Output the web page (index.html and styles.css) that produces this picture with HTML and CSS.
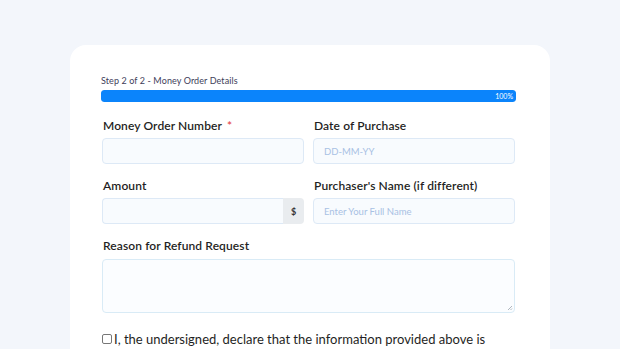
FILE: index.html
```html
<!DOCTYPE html>
<html>
<head>
<meta charset="utf-8">
<link rel="stylesheet" href="styles.css">
</head>
<body>
<div class="card">
  <div class="step">Step 2 of 2 - Money Order Details</div>
  <div class="progress"><div class="bar" style="width:100%">100%</div></div>
  <div class="grid">
    <div class="field">
      <label class="label">Money Order Number <span class="req">*</span></label>
      <div class="input"></div>
    </div>
    <div class="field">
      <label class="label">Date of Purchase</label>
      <div class="input"><span class="ph">DD-MM-YY</span></div>
    </div>
    <div class="field">
      <label class="label">Amount</label>
      <div class="group"><div class="input grow"></div><div class="addon">$</div></div>
    </div>
    <div class="field">
      <label class="label">Purchaser's Name (if different)</label>
      <div class="input"><span class="ph">Enter Your Full Name</span></div>
    </div>
    <div class="field full">
      <label class="label">Reason for Refund Request</label>
      <div class="textarea"><svg class="grip" width="6" height="6" viewBox="0 0 6 6"><path d="M5 1L1 5M5 3.5L3.5 5" stroke="#9aa3ad" stroke-width="0.8"/></svg></div>
    </div>
  </div>
  <div class="declare"><span class="box"></span>I, the undersigned, declare that the information provided above is</div>
</div>
</body>
</html>
```
FILE: styles.css
```css
html, body { margin: 0; padding: 0; }
body {
  background: #f3f6fb;
  font-family: "Lato", "Noto Sans", sans-serif;
  width: 620px;
  height: 349px;
  overflow: hidden;
}
.card {
  margin: 45px 0 0 70px;
  width: 480px;
  height: 304px;
  box-sizing: border-box;
  background: #fff;
  border-radius: 16px 16px 0 0;
  padding: 30px 34px 0 31px;
}
.step {
  font-size: 9px;
  color: #3e3e5a;
  line-height: 12px;
  letter-spacing: 0.1px;
}
.progress {
  margin-top: 3px;
  height: 12px;
  background: #e6eefa;
  border-radius: 3px;
  overflow: hidden;
}
.bar {
  height: 12px;
  background: #0b84fb;
  border-radius: 3px;
  color: #fff;
  font-size: 7px;
  line-height: 12px;
  text-align: right;
  padding-right: 3px;
  box-sizing: border-box;
}
.grid {
  display: grid;
  grid-template-columns: 202px 202px;
  column-gap: 9px;
  row-gap: 14px;
  margin-top: 16px;
  padding-left: 1px;
}
.full { grid-column: 1 / 3; }
.field { display: flex; flex-direction: column; }
.label {
  font-size: 12px;
  font-weight: 600;
  color: #1f1f24;
  line-height: 16px;
  padding-left: 1px;
  margin-bottom: 4px;
  letter-spacing: 0.1px;
}
.req { color: #e5484d; margin-left: 2px; }
.input {
  height: 26px;
  box-sizing: border-box;
  border: 1px solid #dde9f6;
  background: #f8fbfe;
  border-radius: 4px;
  display: flex;
  align-items: center;
  padding-left: 10px;
}
.ph { font-size: 9.5px; color: #a8c1e4; }
.group { display: flex; }
.grow { flex: 1; border-radius: 4px 0 0 4px; border-right: none; }
.addon {
  width: 21px;
  height: 26px;
  background: #e9ecef;
  border-radius: 0 4px 4px 0;
  display: flex;
  align-items: center;
  justify-content: center;
  font-size: 9px;
  font-weight: 700;
  color: #333;
}
.field.full .label { margin-bottom: 5px; }
.textarea {
  height: 54px;
  box-sizing: border-box;
  border: 1px solid #d9ebf6;
  background: #fbfdff;
  border-radius: 4px;
  position: relative;
}
.grip { position: absolute; right: 1px; bottom: 1px; }
.declare {
  margin-top: 16px;
  padding-left: 1px;
  display: flex;
  align-items: center;
  font-size: 13px;
  line-height: 20px;
  color: #1f1f24;
  white-space: nowrap;
}
.box {
  width: 8px;
  height: 8px;
  border: 1px solid #777;
  border-radius: 2px;
  margin-right: 2px;
  background: #fff;
}
```
